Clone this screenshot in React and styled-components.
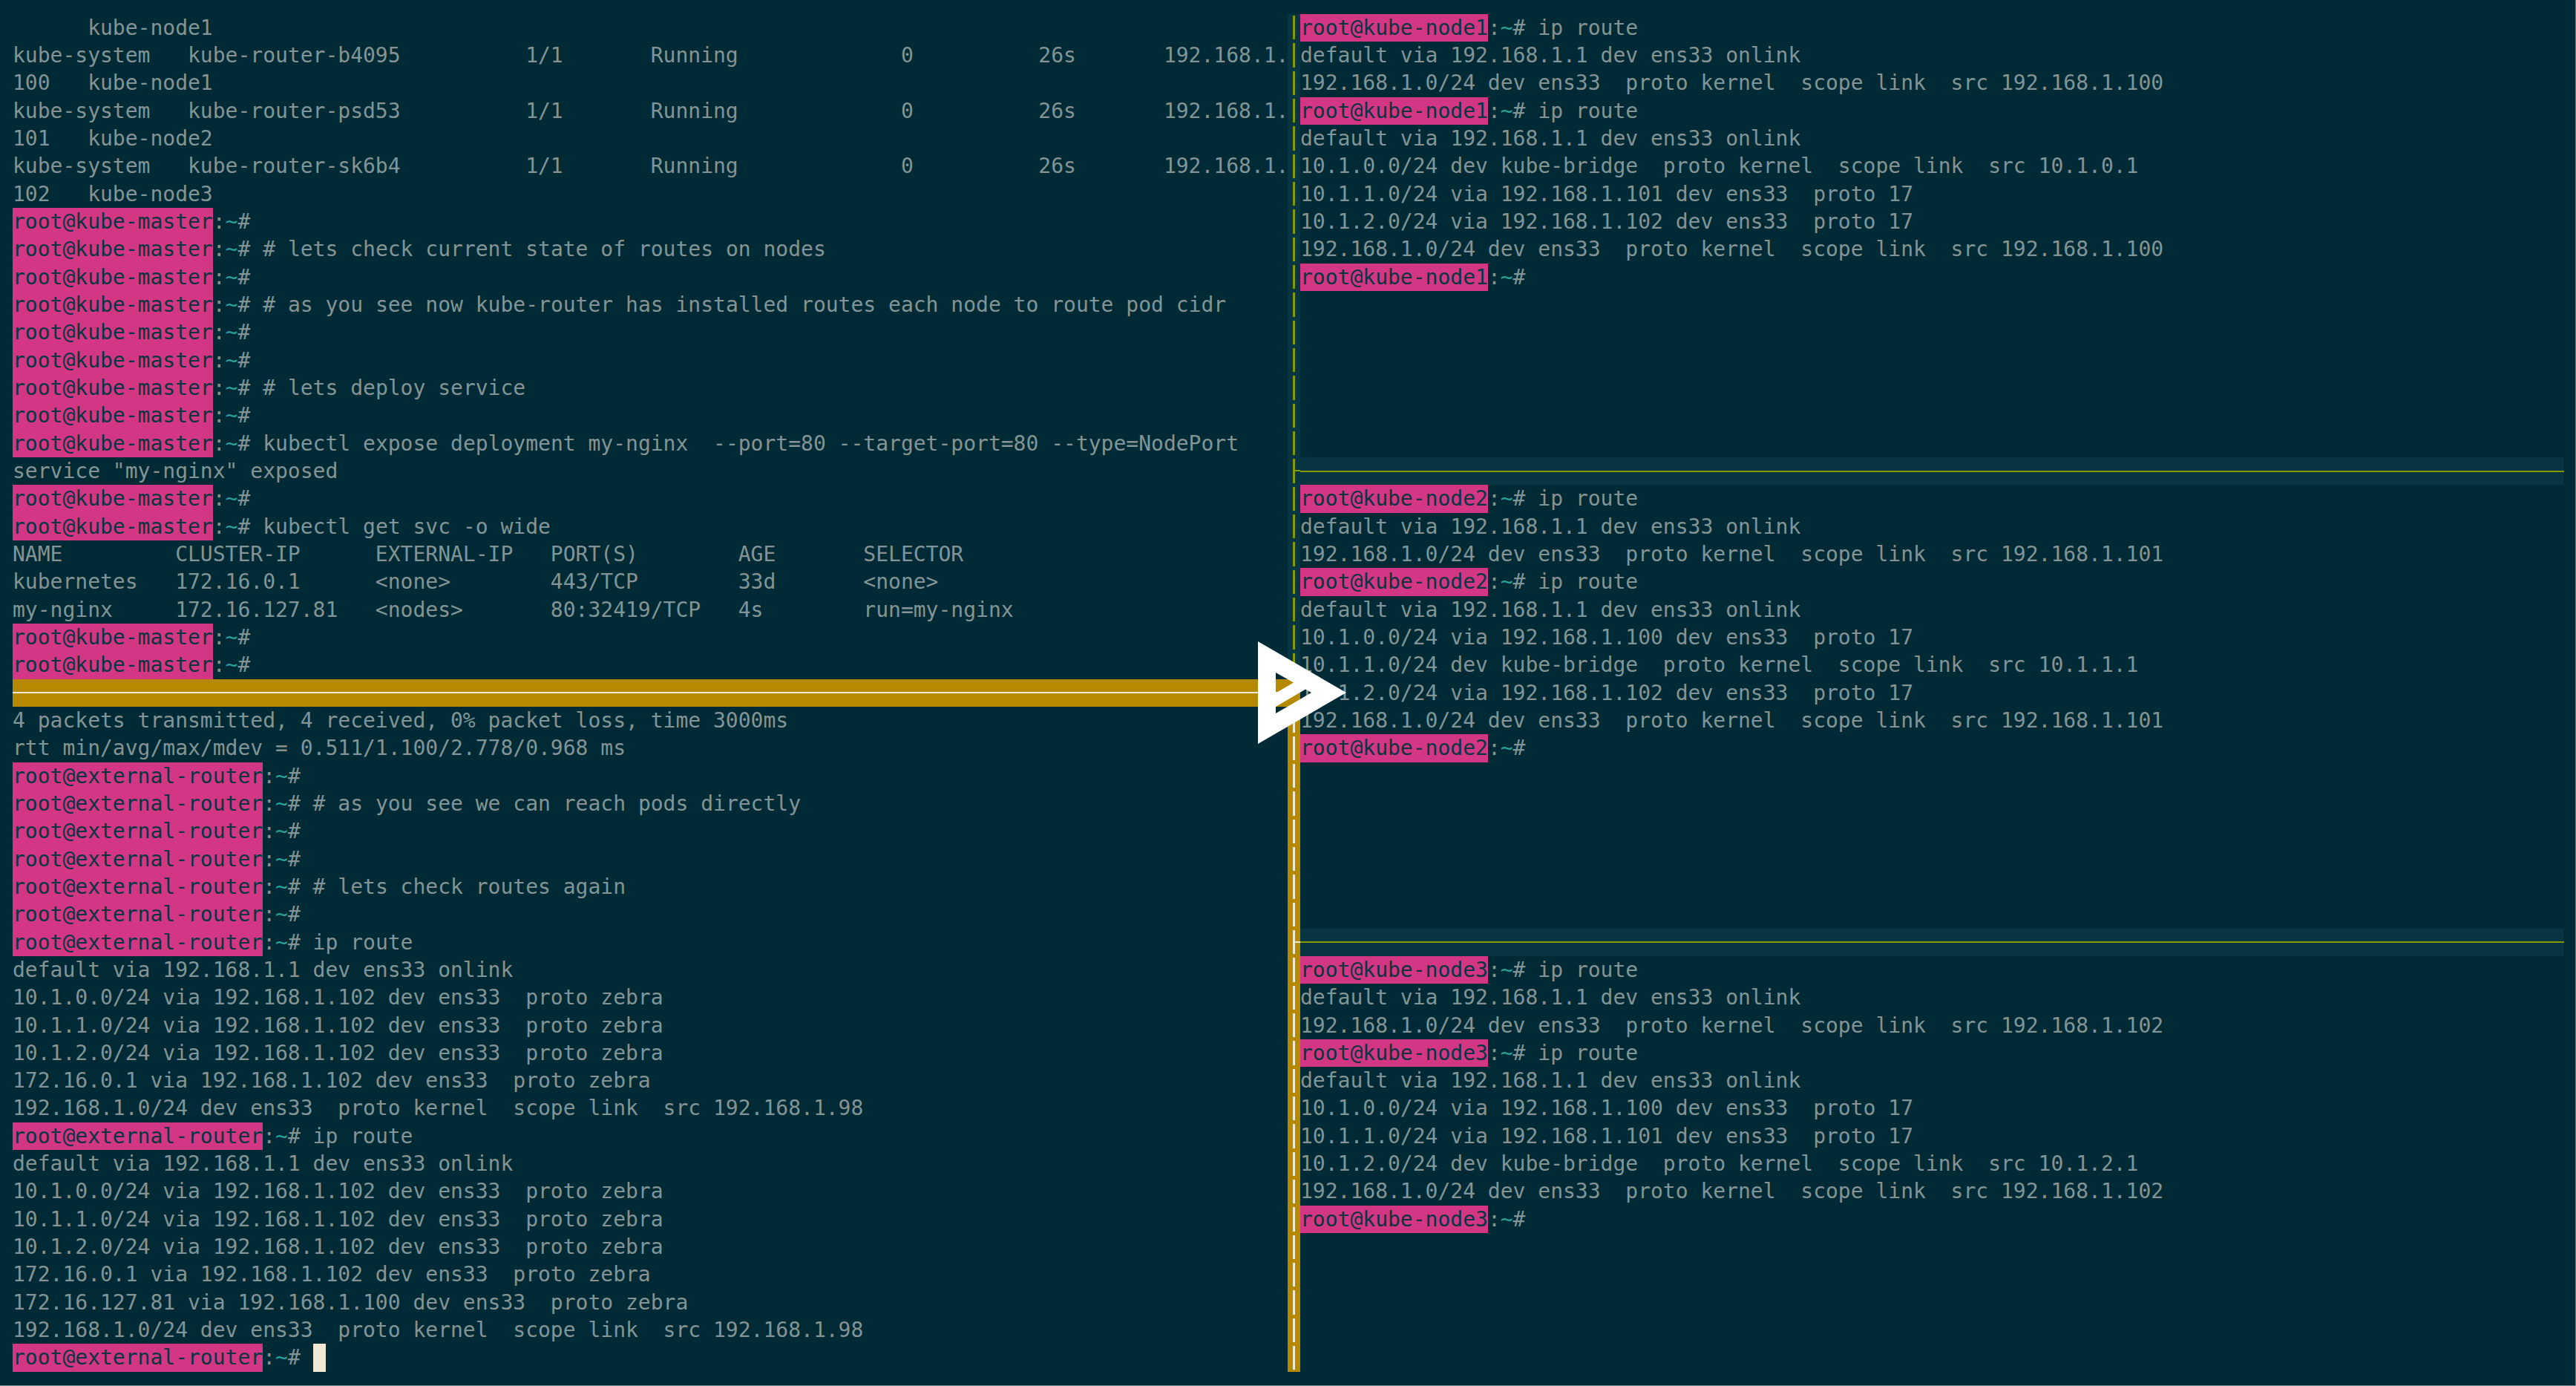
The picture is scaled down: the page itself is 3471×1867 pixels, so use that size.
import React from "react";
import styled, { createGlobalStyle } from "styled-components";

const ROW = 37.33;
const Global = createGlobalStyle`
  html, body { margin: 0; padding: 0; background: #002b36; }
`;

const Screen = styled.div`
  position: relative;
  box-sizing: border-box;
  width: 3471px;
  height: 1867px;
  overflow: hidden;
  display: flex;
  align-items: flex-start;
  padding: 18.67px 0 0 17px;
  background: #002b36;
  border-right: 1px solid #6f8a90;
  border-bottom: 1px solid #6f8a90;
  font-family: "DejaVu Sans Mono", "Liberation Mono", monospace;
  font-size: 28px;
  color: #839496;
`;
const Column = styled.div`
  display: flex;
  flex-direction: column;
  flex: none;
  width: ${(p) => p.$width}px;
`;
const Pane = styled.div`
  display: flex;
  flex-direction: column;
  height: ${(p) => p.$rows * ROW}px;
  overflow: hidden;
`;
const Row = styled.div`
  flex: none;
  display: flex;
  align-items: stretch;
  height: ${ROW}px;
  line-height: ${ROW}px;
  white-space: pre;
  overflow: hidden;
`;
const Host = styled.span`
  background: #d33682;
  color: #073642;
`;
const Tilde = styled.span`
  color: #2aa198;
`;
const Cursor = styled.span`
  flex: none;
  width: 17px;
  margin-left: 17px;
  background: #eee8d5;
`;
const StatusBar = styled.div`
  flex: none;
  height: ${ROW}px;
  display: flex;
  align-items: center;
  background: #b58900;
`;
const StatusLine = styled.div`
  flex: 1;
  height: 2px;
  background: #eee8d5;
`;
const SplitBar = styled.div`
  flex: none;
  width: 1702px;
  height: ${ROW}px;
  display: flex;
  align-items: center;
  background: #073642;
`;
const SplitLine = styled.div`
  flex: none;
  width: 1703px;
  height: 2px;
  background: #859900;
`;
const Rail = styled.div`
  flex: none;
  width: 17px;
  display: flex;
  flex-direction: column;
`;
const RailCell = styled.div`
  position: relative;
  flex: none;
  height: ${ROW}px;
  display: flex;
  padding-left: 7px;
  box-sizing: border-box;
  width: 17px;
  background: ${(p) => (p.$active ? "#b58900" : "#073642")};
`;
const RailDash = styled.div`
  width: 3px;
  margin: 2.5px 0;
  background: ${(p) => (p.$active ? "#eee8d5" : "#859900")};
`;
const RailStub = styled.div`
  position: absolute;
  left: 7px;
  right: 0;
  top: 17.5px;
  height: 2px;
  background: ${(p) => (p.$active ? "#eee8d5" : "#859900")};
`;
const RailBlank = styled.div`
  position: absolute;
  left: 0;
  width: 10px;
  top: 17.5px;
  height: 2px;
  background: #eee8d5;
`;
const Logo = styled.svg`
  position: absolute;
  left: 1695px;
  top: 864px;
  width: 119px;
  height: 138px;
`;

const Prompt = ({ host, cmd = "", cursor }) => (
  <Row>
    <Host>root@{host}</Host>
    <span>
      :<Tilde>~</Tilde>#{cmd ? " " + cmd : ""}
    </span>
    {cursor ? <Cursor /> : null}
  </Row>
);
const Lines = ({ items, host }) =>
  items.map((it, i) =>
    typeof it === "string" ? (
      <Row key={i}>{it}</Row>
    ) : (
      <Prompt key={i} host={host} cmd={it.c} cursor={it.cursor} />
    )
  );

const P = (c) => ({ c });
const DEF = "default via 192.168.1.1 dev ens33 onlink";

const masterRows = [
  "      kube-node1",
  "kube-system   kube-router-b4095          1/1       Running             0          26s       192.168.1.",
  "100   kube-node1",
  "kube-system   kube-router-psd53          1/1       Running             0          26s       192.168.1.",
  "101   kube-node2",
  "kube-system   kube-router-sk6b4          1/1       Running             0          26s       192.168.1.",
  "102   kube-node3",
  P(),
  P("# lets check current state of routes on nodes"),
  P(),
  P("# as you see now kube-router has installed routes each node to route pod cidr"),
  P(),
  P(),
  P("# lets deploy service"),
  P(),
  P("kubectl expose deployment my-nginx  --port=80 --target-port=80 --type=NodePort"),
  'service "my-nginx" exposed',
  P(),
  P("kubectl get svc -o wide"),
  "NAME         CLUSTER-IP      EXTERNAL-IP   PORT(S)        AGE       SELECTOR",
  "kubernetes   172.16.0.1      <none>        443/TCP        33d       <none>",
  "my-nginx     172.16.127.81   <nodes>       80:32419/TCP   4s        run=my-nginx",
  P(),
  P(),
];

const zebra = (net, via = "192.168.1.102") => `${net} via ${via} dev ens33  proto zebra`;
const KERN98 = "192.168.1.0/24 dev ens33  proto kernel  scope link  src 192.168.1.98";
const routerRows = [
  "4 packets transmitted, 4 received, 0% packet loss, time 3000ms",
  "rtt min/avg/max/mdev = 0.511/1.100/2.778/0.968 ms",
  P(),
  P("# as you see we can reach pods directly"),
  P(),
  P(),
  P("# lets check routes again"),
  P(),
  P("ip route"),
  DEF,
  zebra("10.1.0.0/24"),
  zebra("10.1.1.0/24"),
  zebra("10.1.2.0/24"),
  zebra("172.16.0.1"),
  KERN98,
  P("ip route"),
  DEF,
  zebra("10.1.0.0/24"),
  zebra("10.1.1.0/24"),
  zebra("10.1.2.0/24"),
  zebra("172.16.0.1"),
  zebra("172.16.127.81", "192.168.1.100"),
  KERN98,
  { c: "", cursor: true },
];

const kern = (n) => `192.168.1.0/24 dev ens33  proto kernel  scope link  src 192.168.1.${n}`;
const bridge = (n) => `10.1.${n}.0/24 dev kube-bridge  proto kernel  scope link  src 10.1.${n}.1`;
const via = (n, h) => `10.1.${n}.0/24 via 192.168.1.${h} dev ens33  proto 17`;
const nodeRows = (last, middle) => [
  P("ip route"),
  DEF,
  kern(last),
  P("ip route"),
  DEF,
  ...middle,
  kern(last),
  P(),
];

const railCells = Array.from({ length: 49 }, (_, i) => i);

export default function App() {
  return (
    <Screen>
      <Global />
      <Column $width={1718}>
        <Pane $rows={24}>
          <Lines items={masterRows} host="kube-master" />
        </Pane>
        <StatusBar>
          <StatusLine />
        </StatusBar>
        <Pane $rows={24}>
          <Lines items={routerRows} host="external-router" />
        </Pane>
      </Column>
      <Rail>
        {railCells.map((i) => (
          <RailCell key={i} $active={i >= 24}>
            {i === 24 ? <RailBlank /> : <RailDash $active={i >= 24} />}
            {i === 16 || i === 33 ? <RailStub $active={i === 33} /> : null}
          </RailCell>
        ))}
      </Rail>
      <Column $width={1702}>
        <Pane $rows={16}>
          <Lines host="kube-node1" items={nodeRows(100, [bridge(0), via(1, 101), via(2, 102)])} />
        </Pane>
        <SplitBar>
          <SplitLine />
        </SplitBar>
        <Pane $rows={16}>
          <Lines host="kube-node2" items={nodeRows(101, [via(0, 100), bridge(1), via(2, 102)])} />
        </Pane>
        <SplitBar>
          <SplitLine />
        </SplitBar>
        <Pane $rows={15}>
          <Lines host="kube-node3" items={nodeRows(102, [via(0, 100), via(1, 101), bridge(2)])} />
        </Pane>
      </Column>
      <Logo viewBox="0 0 119 138" aria-hidden="true">
        <path
          fill="#fff"
          fillRule="evenodd"
          d="M0 0L119 69L0 138ZM24 42L24 69.5L48 55.5ZM24 88L24 97L72 69L64 64.5Z"
        />
      </Logo>
    </Screen>
  );
}
